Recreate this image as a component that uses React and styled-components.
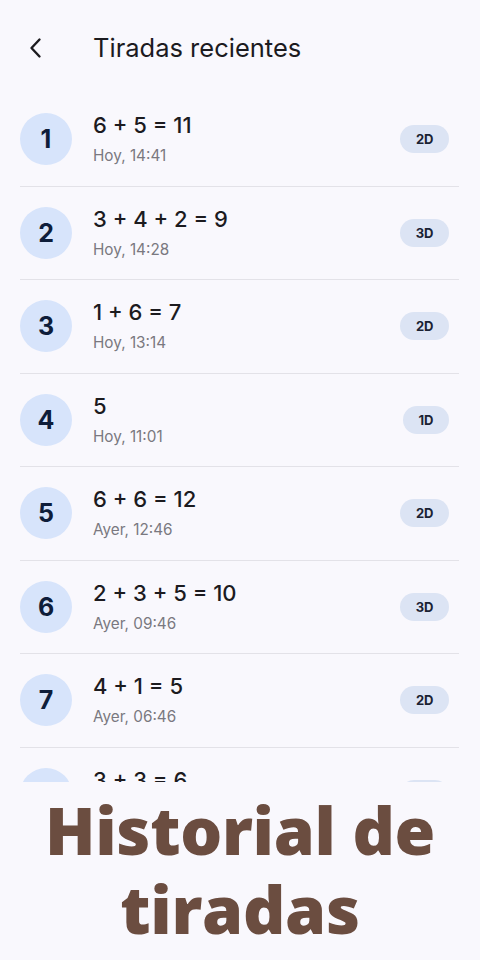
import React from "react";
import styled, { createGlobalStyle } from "styled-components";

const Global = createGlobalStyle`
  html, body { margin: 0; padding: 0; background: #f9f8fd; }
  body { font-family: Inter, "Noto Sans", sans-serif; }
`;

const Page = styled.div`
  width: 480px;
  height: 960px;
  display: flex;
  flex-direction: column;
  background: #f9f8fd;
  overflow: hidden;
`;

const Header = styled.header`
  height: 93px;
  display: flex;
  align-items: center;
  padding: 2px 0 0 24px;
  gap: 45px;
  box-sizing: border-box;
`;

const BackBtn = styled.button`
  width: 24px;
  height: 24px;
  padding: 0;
  border: 0;
  background: none;
  display: flex;
  align-items: center;
  justify-content: center;
  color: #1c1b1f;
`;

const Title = styled.h1`
  margin: 0;
  font-size: 25.5px;
  font-weight: 400;
  color: #1c1b1f;
  letter-spacing: 0;
`;

const List = styled.ul`
  list-style: none;
  margin: 0;
  padding: 0 21px 0 20px;
  height: 689px;
  overflow: hidden;
  flex: none;
`;

const Row = styled.li`
  height: 93.5px;
  box-sizing: border-box;
  display: flex;
  align-items: center;
  gap: 21px;
  border-bottom: 1.5px solid #e3e2e8;
  padding-right: 10px;
`;

const Avatar = styled.div`
  width: 52px;
  height: 52px;
  border-radius: 50%;
  background: #d7e4fb;
  color: #0e1d3a;
  font-size: 25px;
  font-weight: 700;
  display: flex;
  align-items: center;
  justify-content: center;
  flex: none;
`;

const Texts = styled.div`
  flex: 1;
  display: flex;
  flex-direction: column;
  gap: 8px;
`;

const Main = styled.div`
  font-size: 22px;
  font-weight: 500;
  color: #1c1b1f;
  line-height: 26px;
`;

const Sub = styled.div`
  font-size: 15.3px;
  color: #7a7880;
  line-height: 20px;
`;

const Badge = styled.span`
  height: 28px;
  padding: 0 15.5px;
  border-radius: 14px;
  background: #dce4f4;
  color: #1a2233;
  font-size: 13px;
  font-weight: 700;
  display: inline-flex;
  align-items: center;
  justify-content: center;
`;

const Caption = styled.div`
  flex: 1;
  display: flex;
  align-items: flex-start;
  justify-content: center;
  text-align: center;
  font-family: "Open Sans", "Noto Sans", sans-serif;
  font-weight: 800;
  font-size: 66px;
  line-height: 79px;
  letter-spacing: -0.3px;
  font-variant-ligatures: none;
  color: #6b4d40;
  padding-top: 8px;
`;

const rolls = [
  ["6 + 5 = 11", "Hoy, 14:41", "2D"],
  ["3 + 4 + 2 = 9", "Hoy, 14:28", "3D"],
  ["1 + 6 = 7", "Hoy, 13:14", "2D"],
  ["5", "Hoy, 11:01", "1D"],
  ["6 + 6 = 12", "Ayer, 12:46", "2D"],
  ["2 + 3 + 5 = 10", "Ayer, 09:46", "3D"],
  ["4 + 1 = 5", "Ayer, 06:46", "2D"],
  ["3 + 3 = 6", "Ayer, 05:12", "2D"],
];

export default function App() {
  return (
    <Page>
      <Global />
      <Header>
        <BackBtn aria-label="Volver">
          <svg width="24" height="24" viewBox="0 0 24 24" fill="none">
            <path d="M15.5 3.5 L7.5 12 L15.5 20.5" stroke="#1c1b1f" strokeWidth="2.4" strokeLinecap="round" strokeLinejoin="round" />
          </svg>
        </BackBtn>
        <Title>Tiradas recientes</Title>
      </Header>
      <List>
        {rolls.map(([m, s, b], i) => (
          <Row key={i}>
            <Avatar>{i + 1}</Avatar>
            <Texts>
              <Main>{m}</Main>
              <Sub>{s}</Sub>
            </Texts>
            <Badge>{b}</Badge>
          </Row>
        ))}
      </List>
      <Caption>Historial de<br />tiradas</Caption>
    </Page>
  );
}
